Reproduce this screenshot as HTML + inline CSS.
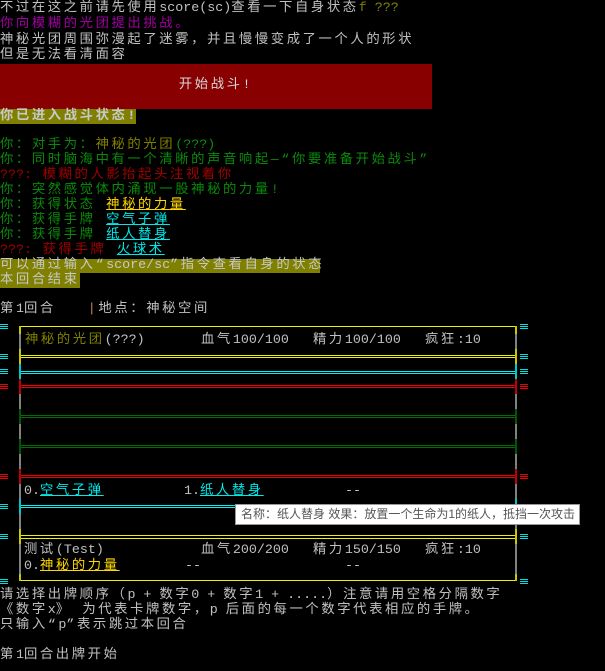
<!DOCTYPE html>
<html><head><meta charset="utf-8"><style>
body{margin:0;width:605px;height:671px;background:#000;overflow:hidden;position:relative;font-family:"Liberation Mono","WenQuanYi Zen Hei","Noto Sans CJK SC",monospace;font-size:13.33px;color:#c0c0c0}
.l{position:absolute;left:0;height:16px;line-height:16px;white-space:pre}
.c{letter-spacing:2.6px}
.g{color:#0a8a0a}.r{color:#a00000}.m{color:#a000a0}.o{color:#808000}.y{color:#ffd700;text-decoration:underline}.cy{color:#00e8e8;text-decoration:underline}
.hl{background:#808000;color:#c8c8c8}
.h{position:absolute;left:19px;width:498px;height:1px}
.v{position:absolute;width:2px}
.k{position:absolute;width:8px;height:1px;background:currentColor;box-shadow:0 2px 0 currentColor,0 4px 0 currentColor}
</style></head><body>
<div class="l c" style="top:1px">不过在这之前请先使用<span style="letter-spacing:0">score(sc)</span>查看一下自身状态<span class="o" style="letter-spacing:0">f ???</span></div>
<div class="l c m" style="top:17px">你向模糊的光团提出挑战。</div>
<div class="l c" style="top:33px">神秘光团周围弥漫起了迷雾，并且慢慢变成了一个人的形状</div>
<div class="l c" style="top:48px">但是无法看清面容</div>
<div style="position:absolute;left:0;top:64px;width:432px;height:45px;background:#880000;color:#d8d8d8;text-align:center;line-height:44px" class="c">开始战斗!</div>
<div class="l c hl" style="top:109px;height:15px;width:136px;font-weight:bold">你已进入战斗状态!</div>
<div class="l c g" style="top:138px">你：对手为：<span class="o">神秘的光团</span><span style="letter-spacing:0">(???)</span></div>
<div class="l c g" style="top:153px">你：同时脑海中有一个清晰的声音响起—“你要准备开始战斗”</div>
<div class="l c r" style="top:168px"><span style="letter-spacing:0">???:</span> 模糊的人影抬起头注视着你</div>
<div class="l c g" style="top:183px">你：突然感觉体内涌现一股神秘的力量!</div>
<div class="l c g" style="top:198px">你：获得状态 <span class="y">神秘的力量</span></div>
<div class="l c g" style="top:213px">你：获得手牌 <span class="cy">空气子弹</span></div>
<div class="l c g" style="top:228px">你：获得手牌 <span class="cy">纸人替身</span></div>
<div class="l c r" style="top:243px"><span style="letter-spacing:0">???:</span> 获得手牌 <span class="cy">火球术</span></div>
<div class="l c hl" style="top:259px;height:14px;line-height:14px;width:320px">可以通过输入“<span style="letter-spacing:0">score/sc</span>”指令查看自身的状态</div>
<div class="l c hl" style="top:273px;height:15px;line-height:15px;width:80px">本回合结束</div>
<div class="l c" style="top:302px">第<span style="letter-spacing:0">1</span>回合<span style="letter-spacing:0">    </span><span style="color:#d08040">|</span>地点：神秘空间</div>

<div class="h" style="top:326px;background:#f0f000"></div>
<div class="h" style="top:355px;background:#f0f000"></div><div class="h" style="top:357px;background:#f0f000"></div>
<div class="h" style="top:371px;background:#00f0f0"></div><div class="h" style="top:373px;background:#00f0f0"></div>
<div class="h" style="top:385px;background:#f00000"></div><div class="h" style="top:387px;background:#f00000"></div>
<div class="h" style="top:415px;background:#007000"></div><div class="h" style="top:417px;background:#007000"></div>
<div class="h" style="top:445px;background:#007000"></div><div class="h" style="top:447px;background:#007000"></div>
<div class="h" style="top:475px;background:#f00000"></div><div class="h" style="top:477px;background:#f00000"></div>
<div class="h" style="top:505px;background:#00f0f0"></div><div class="h" style="top:507px;background:#00f0f0"></div>
<div class="h" style="top:535px;background:#f0f000"></div><div class="h" style="top:538px;background:#f0f000"></div>
<div class="h" style="top:580px;background:#f0f000"></div>

<div class="v" style="left:19px;top:326px;height:255px;background:#808080"></div>
<div class="v" style="left:515px;top:326px;height:255px;background:#808080"></div>
<div class="v" style="left:19px;top:326px;height:8px;background:#c8c800"></div><div class="v" style="left:515px;top:326px;height:8px;background:#c8c800"></div>
<div class="v" style="left:19px;top:349px;height:15px;background:#c8c800"></div><div class="v" style="left:515px;top:349px;height:15px;background:#c8c800"></div>
<div class="v" style="left:19px;top:364px;height:15px;background:#00c8c8"></div><div class="v" style="left:515px;top:364px;height:15px;background:#00c8c8"></div>
<div class="v" style="left:19px;top:379px;height:15px;background:#c00000"></div><div class="v" style="left:515px;top:379px;height:15px;background:#c00000"></div>
<div class="v" style="left:19px;top:409px;height:15px;background:#005800"></div><div class="v" style="left:515px;top:409px;height:15px;background:#005800"></div>
<div class="v" style="left:19px;top:439px;height:15px;background:#005800"></div><div class="v" style="left:515px;top:439px;height:15px;background:#005800"></div>
<div class="v" style="left:19px;top:469px;height:15px;background:#c00000"></div><div class="v" style="left:515px;top:469px;height:15px;background:#c00000"></div>
<div class="v" style="left:19px;top:499px;height:15px;background:#00c8c8"></div><div class="v" style="left:515px;top:499px;height:15px;background:#00c8c8"></div>
<div class="v" style="left:19px;top:529px;height:15px;background:#c8c800"></div><div class="v" style="left:515px;top:529px;height:15px;background:#c8c800"></div>
<div class="v" style="left:19px;top:574px;height:7px;background:#c8c800"></div><div class="v" style="left:515px;top:574px;height:7px;background:#c8c800"></div>

<div class="l c o" style="top:333px;left:25px">神秘的光团<span style="letter-spacing:0;color:#c0c0c0">(???)</span></div>
<div class="l c" style="top:333px;left:201px">血气<span style="letter-spacing:0">100/100</span></div>
<div class="l c" style="top:333px;left:313px">精力<span style="letter-spacing:0">100/100</span></div>
<div class="l c" style="top:333px;left:425px">疯狂<span style="letter-spacing:0">:10</span></div>
<div class="l c" style="top:484px;left:24px"><span style="letter-spacing:0">0.</span><span class="cy">空气子弹</span></div>
<div class="l c" style="top:484px;left:184px"><span style="letter-spacing:0">1.</span><span class="cy">纸人替身</span></div>
<div class="l" style="top:484px;left:345px">--</div>
<div class="l c" style="top:543px;left:24px">测试<span style="letter-spacing:0">(Test)</span></div>
<div class="l c" style="top:543px;left:201px">血气<span style="letter-spacing:0">200/200</span></div>
<div class="l c" style="top:543px;left:313px">精力<span style="letter-spacing:0">150/150</span></div>
<div class="l c" style="top:543px;left:425px">疯狂<span style="letter-spacing:0">:10</span></div>
<div class="l c" style="top:559px;left:24px"><span style="letter-spacing:0">0.</span><span class="y">神秘的力量</span></div>
<div class="l" style="top:559px;left:185px">--</div>
<div class="l" style="top:559px;left:345px">--</div>

<div class="k" style="left:0;top:324px;color:#00e0e0"></div><div class="k" style="left:520px;top:324px;color:#00e0e0"></div>
<div class="k" style="left:0;top:354px;color:#00e0e0"></div><div class="k" style="left:520px;top:354px;color:#00e0e0"></div>
<div class="k" style="left:0;top:369px;color:#00e0e0"></div><div class="k" style="left:520px;top:369px;color:#00e0e0"></div>
<div class="k" style="left:0;top:384px;color:#f00000"></div><div class="k" style="left:520px;top:384px;color:#f00000"></div>
<div class="k" style="left:0;top:474px;color:#f00000"></div><div class="k" style="left:520px;top:474px;color:#f00000"></div>
<div class="k" style="left:0;top:504px;color:#00e0e0"></div><div class="k" style="left:520px;top:504px;color:#00e0e0"></div>
<div class="k" style="left:0;top:534px;color:#00e0e0"></div><div class="k" style="left:520px;top:534px;color:#00e0e0"></div>
<div class="k" style="left:0;top:579px;color:#00e0e0"></div><div class="k" style="left:520px;top:579px;color:#00e0e0"></div>

<div style="position:absolute;left:235px;top:504px;background:#fff;border:1px solid #999;font-family:'Liberation Sans','Noto Sans CJK SC',sans-serif;font-size:12px;line-height:19px;color:#555;padding-left:5px;box-sizing:border-box;width:345px;height:21px;white-space:nowrap">名称：纸人替身 效果：放置一个生命为1的纸人，抵挡一次攻击</div>

<div class="l c" style="top:588px">请选择出牌顺序（<span style="letter-spacing:0">p + </span>数字<span style="letter-spacing:0">0 + </span>数字<span style="letter-spacing:0">1 + .....</span>）注意请用空格分隔数字</div>
<div class="l c" style="top:603px">《数字<span style="letter-spacing:0">x</span>》 为代表卡牌数字，<span style="letter-spacing:0">p </span>后面的每一个数字代表相应的手牌。</div>
<div class="l c" style="top:618px">只输入“<span style="letter-spacing:0">p</span>”表示跳过本回合</div>
<div class="l c" style="top:648px">第<span style="letter-spacing:0">1</span>回合出牌开始</div>
</body></html>
